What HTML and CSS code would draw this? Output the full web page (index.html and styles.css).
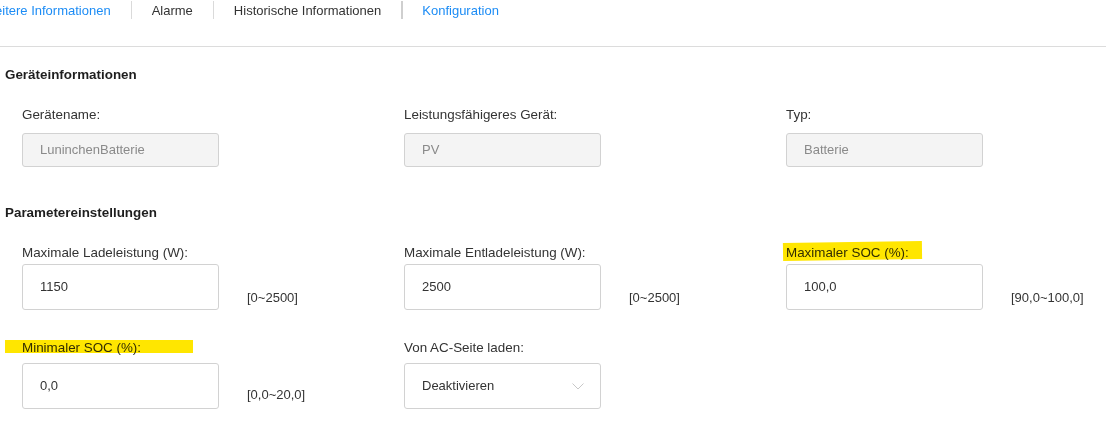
FILE: index.html
```html
<!DOCTYPE html>
<html lang="de">
<head>
	<meta charset="UTF-8">
	<title>Konfiguration</title>
	<link rel="stylesheet" href="styles.css">
</head>
<body>
	<nav class="tabs">
		<a class="tab is-link">Weitere Informationen</a>
		<a class="tab">Alarme</a>
		<a class="tab">Historische Informationen</a>
		<a class="tab is-active">Konfiguration</a>
	</nav>

	<main class="content">
		<section class="group">
			<h2 class="group-title">Geräteinformationen</h2>
			<div class="fields fields-info">
				<div class="field">
					<label class="field-label">Gerätename:</label>
					<div class="field-control">
						<div class="input is-disabled">LuninchenBatterie</div>
					</div>
				</div>
				<div class="field">
					<label class="field-label">Leistungsfähigeres Gerät:</label>
					<div class="field-control">
						<div class="input is-disabled">PV</div>
					</div>
				</div>
				<div class="field">
					<label class="field-label">Typ:</label>
					<div class="field-control">
						<div class="input is-disabled">Batterie</div>
					</div>
				</div>
			</div>
		</section>

		<section class="group group-params">
			<h2 class="group-title">Parametereinstellungen</h2>
			<div class="fields fields-params">
				<div class="field">
					<label class="field-label">Maximale Ladeleistung (W):</label>
					<div class="field-control">
						<div class="input">1150</div>
						<span class="range">[0~2500]</span>
					</div>
				</div>
				<div class="field">
					<label class="field-label">Maximale Entladeleistung (W):</label>
					<div class="field-control">
						<div class="input">2500</div>
						<span class="range">[0~2500]</span>
					</div>
				</div>
				<div class="field">
					<label class="field-label marked marked-max">Maximaler SOC (%):</label>
					<div class="field-control">
						<div class="input">100,0</div>
						<span class="range">[90,0~100,0]</span>
					</div>
				</div>
			</div>
			<div class="fields fields-params fields-second">
				<div class="field">
					<label class="field-label marked marked-min">Minimaler SOC (%):</label>
					<div class="field-control">
						<div class="input">0,0</div>
						<span class="range">[0,0~20,0]</span>
					</div>
				</div>
				<div class="field">
					<label class="field-label">Von AC-Seite laden:</label>
					<div class="field-control">
						<div class="input select">
							<span>Deaktivieren</span>
							<svg class="chevron" width="12" height="7" viewBox="0 0 12 7"><path d="M0.5 0.5 L6 6 L11.5 0.5" fill="none" stroke="#c8c8c8" stroke-width="1"/></svg>
						</div>
					</div>
				</div>
			</div>
		</section>
	</main>
</body>
</html>
```

FILE: styles.css
```css
* {
	box-sizing: border-box;
}

html, body {
	margin: 0;
	padding: 0;
	background: white;
}

body {
	font-family: "Liberation Sans", Arial, sans-serif;
	font-size: 13px;
	line-height: 18px;
	color: #333;
}

/* tabs */
.tabs {
	display: flex;
	height: 47px;
	margin-left: -37px;
	border-bottom: 1px solid #dcdcdc;
}

.tab {
	margin-top: 1px;
	height: 18px;
	padding: 0 20px;
	line-height: 20px;
	color: #333;
	white-space: nowrap;
}

.tab + .tab {
	border-left: 1px solid #dadada;
}

.tab:last-child {
	border-left: 2px solid #cfcfcf;
	padding-left: 19px;
}

.tab.is-link,
.tab.is-active {
	color: #1c8cf5;
}

/* content */
.content {
	padding-left: 5px;
}

.group-title {
	margin: 19px 0 0;
	font-size: 13.4px;
	line-height: 18px;
	font-weight: 700;
	color: #1e1e1e;
}

.group-params .group-title {
	margin-top: 37px;
}

.fields {
	display: grid;
	grid-template-columns: repeat(3, 382px);
	margin-top: 22px;
	padding-left: 17px;
}

.fields-params {
	margin-top: 22px;
}

.fields-second {
	margin-top: 29px;
}

.field-label {
	display: block;
	margin-bottom: 2px;
	font-size: 13.4px;
	color: #333;
	white-space: nowrap;
}

.fields-info .field-label {
	margin-bottom: 9px;
}

.fields-second .field-label {
	margin-bottom: 6px;
}

.field-control {
	display: flex;
}

.input {
	display: flex;
	align-items: center;
	width: 197px;
	height: 46px;
	padding: 0 17px;
	border: 1px solid #d2d2d2;
	border-radius: 3px;
	background: white;
	color: #333;
}

.input.is-disabled {
	height: 34px;
	background: #f4f4f4;
	color: #8a8a8a;
}

.select {
	justify-content: space-between;
	padding-right: 16px;
}

.chevron {
	display: block;
}

.range {
	align-self: flex-end;
	margin: 0 0 3px 28px;
	color: #333;
	white-space: nowrap;
}

.fields-second .range {
	margin-bottom: 5px;
}

/* highlighter marks */
.marked {
	position: relative;
	align-self: start;
}

.marked::before {
	content: "";
	position: absolute;
	background: #ffe600;
	mix-blend-mode: multiply;
}

.marked-max::before {
	top: -2px;
	left: -3px;
	width: 139px;
	height: 18px;
	transform: rotate(-0.8deg);
}

.marked-min::before {
	top: 1px;
	left: -17px;
	width: 188px;
	height: 13px;
}
```
